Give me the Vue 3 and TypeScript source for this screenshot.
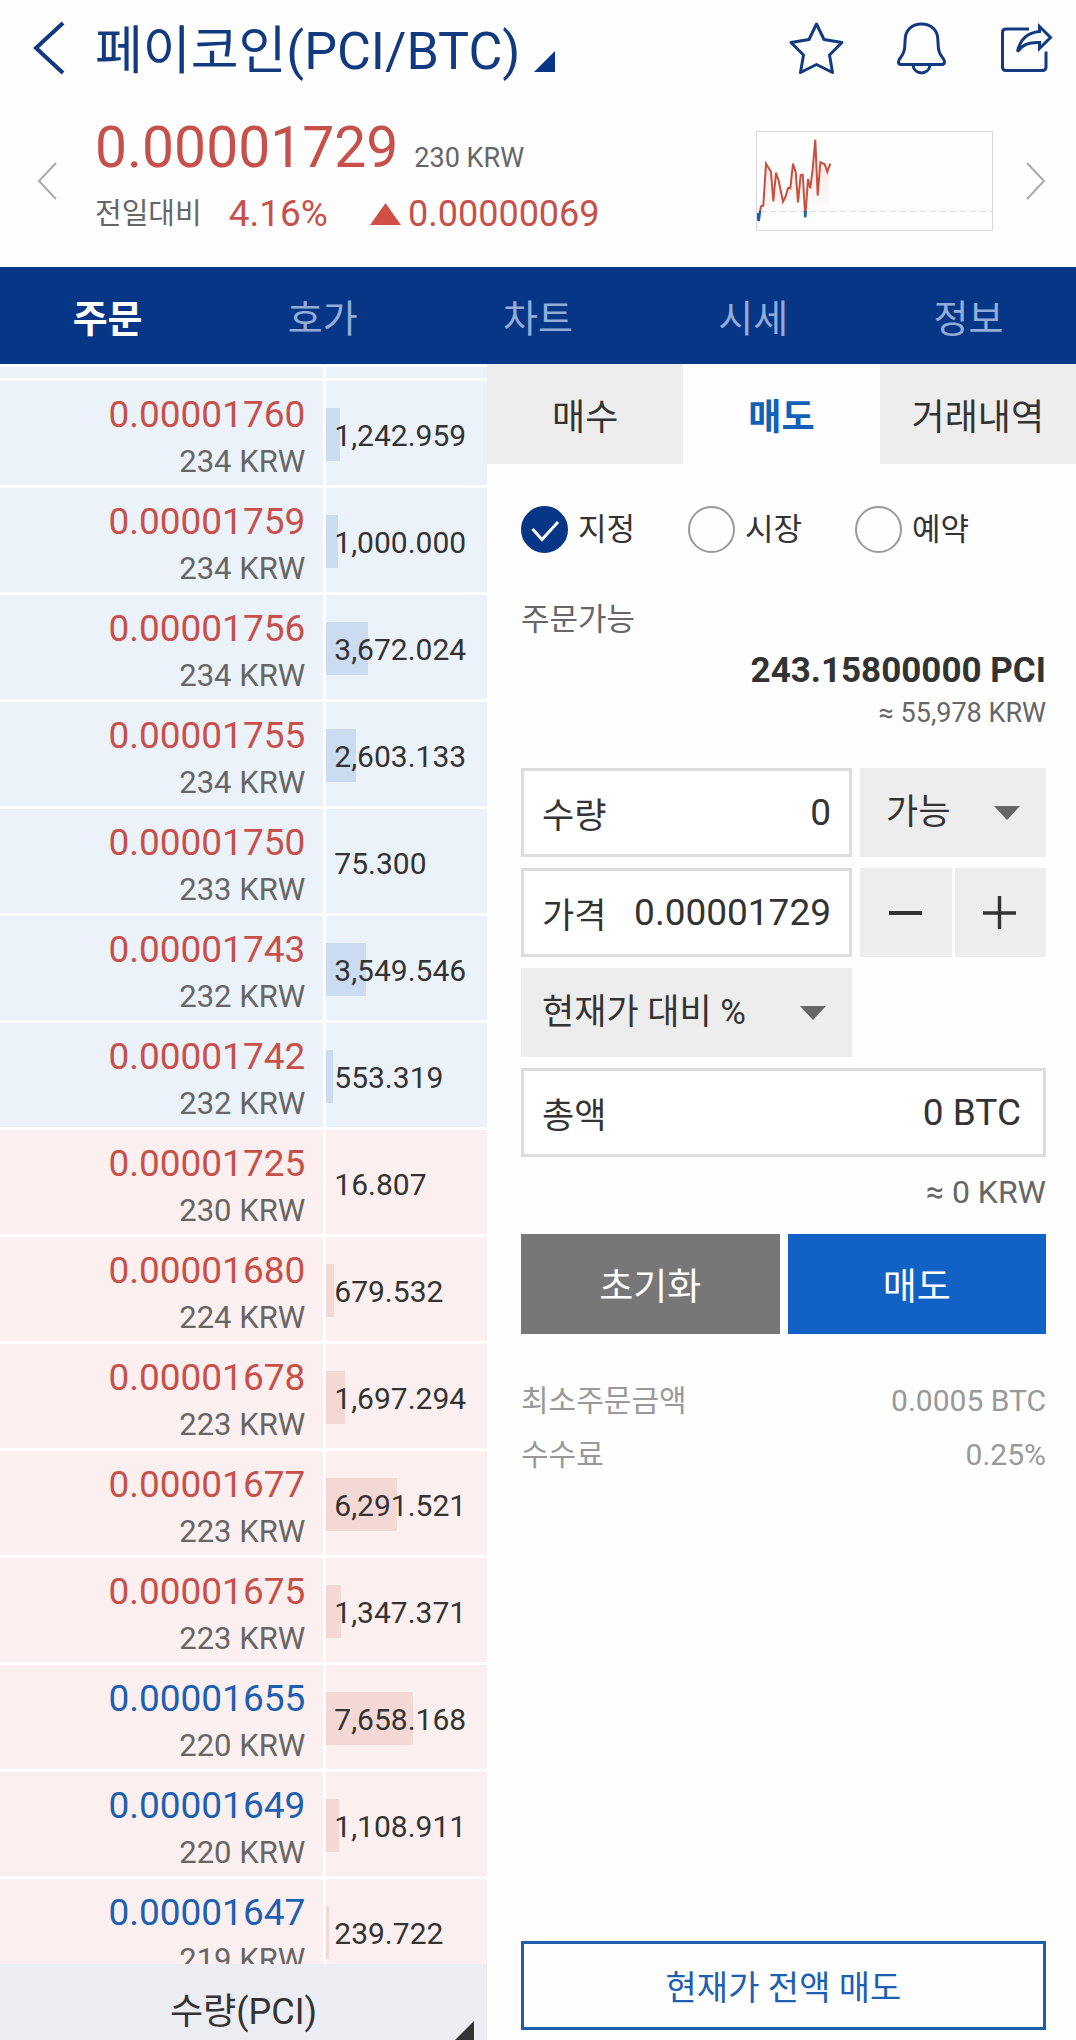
<script setup lang="ts">
import { ref } from 'vue'

interface BookRow {
  price: string
  krw: number
  quantity: string
  side: 'ask' | 'bid'
  trend: 'up' | 'down'
}

const sections = ['주문', '호가', '차트', '시세', '정보']
const activeSection = ref('주문')

const orderTabs = ['매수', '매도', '거래내역']
const activeOrderTab = ref('매도')

const orderTypes = ['지정', '시장', '예약']
const orderType = ref('지정')

const quantity = ref('0')
const price = ref('0.00001729')
const total = ref('0 BTC')

const rows: BookRow[] = [
  { price: '0.00001760', krw: 234, quantity: '1,242.959', side: 'ask', trend: 'up' },
  { price: '0.00001759', krw: 234, quantity: '1,000.000', side: 'ask', trend: 'up' },
  { price: '0.00001756', krw: 234, quantity: '3,672.024', side: 'ask', trend: 'up' },
  { price: '0.00001755', krw: 234, quantity: '2,603.133', side: 'ask', trend: 'up' },
  { price: '0.00001750', krw: 233, quantity: '75.300', side: 'ask', trend: 'up' },
  { price: '0.00001743', krw: 232, quantity: '3,549.546', side: 'ask', trend: 'up' },
  { price: '0.00001742', krw: 232, quantity: '553.319', side: 'ask', trend: 'up' },
  { price: '0.00001725', krw: 230, quantity: '16.807', side: 'bid', trend: 'up' },
  { price: '0.00001680', krw: 224, quantity: '679.532', side: 'bid', trend: 'up' },
  { price: '0.00001678', krw: 223, quantity: '1,697.294', side: 'bid', trend: 'up' },
  { price: '0.00001677', krw: 223, quantity: '6,291.521', side: 'bid', trend: 'up' },
  { price: '0.00001675', krw: 223, quantity: '1,347.371', side: 'bid', trend: 'up' },
  { price: '0.00001655', krw: 220, quantity: '7,658.168', side: 'bid', trend: 'down' },
  { price: '0.00001649', krw: 220, quantity: '1,108.911', side: 'bid', trend: 'down' },
  { price: '0.00001647', krw: 219, quantity: '239.722', side: 'bid', trend: 'down' },
]

// Depth bars are scaled to this quantity; tiny orders get no bar.
const FULL_DEPTH = 14250
const MIN_DEPTH = 100

function depth(row: BookRow): string {
  const amount = Number(row.quantity.replace(/,/g, ''))
  return amount < MIN_DEPTH ? '0' : `${(amount / FULL_DEPTH) * 100}%`
}
</script>

<template>
  <div class="app">
    <header class="topbar">
      <button class="plain back" type="button" aria-label="뒤로">
        <svg width="34" height="54" viewBox="0 0 34 54"><path d="M31 2 4 27l27 25" fill="none" stroke="#123a80" stroke-width="4" /></svg>
      </button>
      <button class="plain title" type="button">
        <span>페이코인(PCI/BTC)</span>
        <svg width="21" height="21" viewBox="0 0 21 21"><path d="M21 0v21H0z" fill="#083686" /></svg>
      </button>
      <div class="actions">
        <button class="plain" type="button" aria-label="관심">
          <svg width="56" height="56" viewBox="0 0 56 56" class="line-icon">
            <path d="M28.500 4 36 19.500 54 22.500 41.500 35 44.500 52.500 28.500 44.500 12.500 52.500 15.500 35 3 22.500 21 19.500z" />
          </svg>
        </button>
        <button class="plain" type="button" aria-label="알림">
          <svg width="56" height="56" viewBox="0 0 56 56" class="line-icon">
            <path d="M28.500 4C18 4 12.500 11 12.200 19L11.700 27C11.500 33 9.500 35 6.500 39 4.500 42 5.500 44.500 8.500 44.500H48.500C51.500 44.500 52.500 42 50.500 39 47.500 35 45.500 33 45.300 27L44.800 19C44.500 11 39 4 28.500 4zM20 45C21 55.500 36 55.500 37 45" />
          </svg>
        </button>
        <button class="plain" type="button" aria-label="공유">
          <svg width="56" height="56" viewBox="0 0 56 56" class="line-icon">
            <path d="M31 9H8Q4.500 9 4.500 12.500V47Q4.500 50.500 8 50.500H44.500Q48 50.500 48 47V31.500" stroke-linejoin="miter" />
            <path d="M41.500 6.500 52.500 17.500 41.500 28.500V22.500C31 22 25 24.500 19.500 31.500 22 20 29 12.500 41.500 11.500z" stroke-linejoin="miter" />
          </svg>
        </button>
      </div>
    </header>

    <section class="ticker">
      <button class="plain prev" type="button" aria-label="이전 코인">
        <svg width="20" height="38" viewBox="0 0 20 38"><path d="M19 1 2 19l17 18" fill="none" stroke="#aaa" stroke-width="2" /></svg>
      </button>
      <div class="quote">
        <div class="quote-price"><strong>0.00001729</strong><span>230 KRW</span></div>
        <div class="quote-change">
          <span class="caption">전일대비</span>
          <span class="rate">4.16%</span>
          <span class="diff">
            <svg width="31" height="22" viewBox="0 0 31 22"><path d="M15.500 0 31 22H0z" fill="#d24f45" /></svg>
            0.00000069
          </span>
        </div>
      </div>
      <svg class="spark" width="237" height="100" viewBox="0 0 237 100">
        <defs>
          <linearGradient id="glow" x1="0" y1="0" x2="0" y2="1">
            <stop offset="0" stop-color="#d24f45" stop-opacity=".2" />
            <stop offset="1" stop-color="#d24f45" stop-opacity="0" />
          </linearGradient>
          <clipPath id="above"><path d="M0 0H237V80H0z" /></clipPath>
          <clipPath id="below"><path d="M0 80H237V100H0z" /></clipPath>
          <path id="trace" d="M1 82 2.700 90 4 80.700 5 75.300 7.300 74.700 10 32.700 15 40.700 17.300 70.300 20 41.700 22.700 49.700 27 70.700 29.700 65.300 32 57 34.300 57.300 37 32.700 39.700 41.300 42 71.300 44.700 44 46.700 43.700 49.300 86.300 52 48 54.300 57.300 56.700 38 59.300 8.700 61.700 64.700 64.300 31.300 68.700 33.300 71.300 40.700 74.300 32.700" />
        </defs>
        <path d="M5 80V75L7 74.700 10 32.700 15 40.700 17.300 70 20 41.700 27 70.700 32 57 37 32.700 42 71 44.700 44 49 80 52 48 54 57 59.300 8.700 61.700 64 64.300 31.300 71.300 40.700 73.300 34V80z" fill="url(#glow)" />
        <path d="M4 80.500H236" stroke="#ddd" stroke-width="1" stroke-dasharray="6 4" />
        <use href="#trace" clip-path="url(#above)" fill="none" stroke="#c8503f" stroke-width="2" />
        <use href="#trace" clip-path="url(#below)" fill="none" stroke="#1261b4" stroke-width="2.400" />
        <path d="M.5.5H236.500V99.500H.5z" fill="none" stroke="#d8d8d8" />
      </svg>
      <button class="plain next" type="button" aria-label="다음 코인">
        <svg width="20" height="38" viewBox="0 0 20 38"><path d="M1 1 18 19 1 37" fill="none" stroke="#aaa" stroke-width="2" /></svg>
      </button>
    </section>

    <nav class="sections">
      <button
        v-for="name in sections"
        :key="name"
        type="button"
        :class="{ active: name === activeSection }"
        @click="activeSection = name"
      >{{ name }}</button>
    </nav>

    <main class="body">
      <section class="book">
        <div class="book-list">
          <table>
            <colgroup><col class="col-price" /><col class="col-quantity" /></colgroup>
            <tbody>
              <tr class="ask edge"><td></td><td></td></tr>
              <tr v-for="row in rows" :key="row.price" :class="row.side">
                <td class="price-cell">
                  <div class="price" :class="row.trend">{{ row.price }}</div>
                  <div class="krw">{{ row.krw }} KRW</div>
                </td>
                <td class="quantity-cell">
                  <div class="quantity">
                    <i class="bar" :style="{ width: depth(row) }"></i>
                    <span>{{ row.quantity }}</span>
                  </div>
                </td>
              </tr>
            </tbody>
          </table>
        </div>
        <button class="unit" type="button">
          수량(PCI)
          <svg class="corner" width="19" height="19" viewBox="0 0 19 19"><path d="M19 0v19H0z" fill="#333" /></svg>
        </button>
      </section>

      <section class="order">
        <div class="order-tabs">
          <button
            v-for="tab in orderTabs"
            :key="tab"
            type="button"
            :class="{ active: tab === activeOrderTab }"
            @click="activeOrderTab = tab"
          >{{ tab }}</button>
        </div>

        <form class="form" @submit.prevent>
          <div class="types">
            <label v-for="type in orderTypes" :key="type">
              <span class="radio">
                <input v-model="orderType" type="radio" name="order-type" :value="type" />
                <svg v-if="orderType === type" width="47" height="47" viewBox="0 0 47 47"><path d="M11.500 23 21 33.500 37 16" fill="none" stroke="#fff" stroke-width="3" /></svg>
              </span>
              {{ type }}
            </label>
          </div>

          <div class="available">주문가능</div>
          <div class="balance">243.15800000 PCI</div>
          <div class="balance-krw">≈ 55,978 KRW</div>

          <div class="fields">
            <div class="field">
              <label for="quantity">수량</label>
              <input id="quantity" v-model="quantity" type="text" inputmode="decimal" />
            </div>
            <div class="picker compact">
              <select aria-label="수량 비율"><option>가능</option></select>
              <svg width="26" height="14" viewBox="0 0 26 14"><path d="M0 0h26L13 14z" fill="#666" /></svg>
            </div>
            <div class="field">
              <label for="price">가격</label>
              <input id="price" v-model="price" type="text" inputmode="decimal" />
            </div>
            <div class="stepper">
              <button type="button" aria-label="가격 내리기">
                <svg width="34" height="34" viewBox="0 0 34 34"><path d="M0 17H33" stroke="#333" stroke-width="4" /></svg>
              </button>
              <button type="button" aria-label="가격 올리기">
                <svg width="34" height="34" viewBox="0 0 34 34"><path d="M0 17H33M16.500 0V33" stroke="#333" stroke-width="3.400" /></svg>
              </button>
            </div>
            <div class="picker">
              <select aria-label="현재가 대비 비율"><option>현재가 대비 %</option></select>
              <svg width="26" height="14" viewBox="0 0 26 14"><path d="M0 0h26L13 14z" fill="#666" /></svg>
            </div>
            <div class="field total">
              <label for="total">총액</label>
              <input id="total" v-model="total" type="text" />
            </div>
          </div>
          <div class="total-krw">≈ 0 KRW</div>

          <div class="submit">
            <button class="reset" type="reset">초기화</button>
            <button class="sell" type="submit">매도</button>
          </div>

          <dl class="fees">
            <div><dt>최소주문금액</dt><dd>0.0005 BTC</dd></div>
            <div><dt>수수료</dt><dd>0.25%</dd></div>
          </dl>

          <button class="sell-all" type="button">현재가 전액 매도</button>
        </form>
      </section>
    </main>
  </div>
</template>

<style>
body {
  margin: 0;
  background: #fefefe;
}
</style>

<style scoped>
* {
  box-sizing: border-box;
}
.app {
  display: flex;
  flex-direction: column;
  height: 100vh;
  color: #333;
  background: #fefefe;
  font-family: Roboto, "Noto Sans CJK KR", sans-serif;
  overflow: hidden;
}
button,
input,
select {
  margin: 0;
  padding: 0;
  border: 0;
  border-radius: 0;
  color: inherit;
  background: none;
  font: inherit;
}
svg {
  display: block;
  flex: none;
}
.plain {
  display: flex;
  align-items: center;
  flex: none;
}

.topbar {
  display: flex;
  align-items: center;
  flex: none;
  height: 96px;
  padding-right: 22px;
}
.back {
  width: 95px;
  padding-left: 32px;
}
.title {
  align-items: flex-end;
  gap: 14px;
  padding-top: 8px;
  color: #123a80;
  font-size: 52px;
  line-height: 60px;
}
.title svg {
  margin-bottom: 10px;
}
.actions {
  display: flex;
  gap: 49px;
  margin-left: auto;
}
.line-icon {
  fill: none;
  stroke: #123a80;
  stroke-width: 3;
  stroke-linejoin: round;
}

.ticker {
  display: flex;
  align-items: center;
  flex: none;
  padding: 20px 30px 21px 0;
}
.prev {
  width: 95px;
  padding-left: 37px;
}
.quote {
  flex: 1;
  padding-bottom: 12px;
}
.quote-price {
  display: flex;
  align-items: baseline;
  gap: 16px;
  color: #666;
  font-size: 27px;
  line-height: 40px;
}
.quote-price strong {
  color: #c8504a;
  font-size: 57px;
  font-weight: 400;
  line-height: 64px;
}
.quote-change {
  display: flex;
  align-items: center;
  margin-top: 14px;
  color: #c8504a;
  font-size: 36px;
  line-height: 40px;
}
.caption {
  color: #666;
  font-size: 29px;
}
.rate {
  margin-left: 27px;
  font-size: 37px;
}
.diff {
  display: flex;
  align-items: center;
  gap: 7px;
  margin-left: 42px;
}
.next {
  margin-left: 33px;
}

.sections {
  display: flex;
  flex: none;
  height: 97px;
  background: #083686;
}
.sections button {
  flex: 1;
  color: #94acd8;
  font-size: 38px;
}
.sections .active {
  color: #fff;
  font-weight: 700;
}

.body {
  display: grid;
  grid-template-columns: 487fr 589fr;
  flex: 1;
  min-height: 0;
}
.book {
  display: flex;
  flex-direction: column;
  min-height: 0;
}
.book-list {
  flex: 1;
  min-height: 0;
  border-top: 3px solid #fff;
  overflow: hidden;
}
table {
  width: 100%;
  border-spacing: 0;
  table-layout: fixed;
}
.col-price {
  width: 67%;
}
td {
  height: 107px;
  padding: 0;
  border-bottom: 3px solid #fff;
  vertical-align: top;
}
td:first-child {
  border-right: 3px solid #fff;
}
.edge td {
  height: 14px;
}
.ask td {
  background: #ebf2fa;
}
.bid td {
  background: #fbf0ef;
}
td.price-cell {
  padding: 10px 18px 0 0;
  text-align: right;
}
.price,
.krw {
  line-height: 47px;
}
.price {
  font-size: 37px;
}
.up {
  color: #c8504a;
}
.down {
  color: #1d5fb0;
}
.krw {
  color: #666;
  font-size: 31px;
}
td.quantity-cell {
  padding-top: 27px;
}
.quantity {
  position: relative;
  height: 53px;
  padding-left: 8px;
  font-size: 30px;
  line-height: 56px;
}
.quantity span {
  position: relative;
}
.bar {
  position: absolute;
  top: 0;
  bottom: 0;
  left: 0;
}
.ask .bar {
  background: #cbdcf0;
}
.bid .bar {
  background: #f4d8d6;
}
.unit {
  position: relative;
  flex: none;
  height: 76px;
  padding-top: 20px;
  background: #ecedf2;
  font-size: 36px;
  line-height: 56px;
}
.corner {
  position: absolute;
  right: 13px;
  bottom: 0;
}

.order {
  display: flex;
  flex-direction: column;
  min-height: 0;
}
.order-tabs {
  display: flex;
  flex: none;
  height: 100px;
}
.order-tabs button {
  flex: 1;
  background: #ededed;
  font-size: 36px;
}
.order-tabs .active {
  color: #1261b8;
  background: none;
  font-weight: 700;
}
.form {
  display: flex;
  flex-direction: column;
  flex: 1;
  padding: 42px 30px 10px 34px;
}
.types {
  display: flex;
  gap: 53px;
}
.types label {
  display: flex;
  align-items: center;
  gap: 10px;
  font-size: 31px;
  line-height: 47px;
}
.radio {
  display: grid;
}
.radio > * {
  grid-area: 1 / 1;
}
.radio input {
  width: 47px;
  height: 47px;
  border: 2px solid #999;
  border-radius: 50%;
  appearance: none;
}
.radio input:checked {
  border-color: #083686;
  background: #083686;
}
.radio svg {
  pointer-events: none;
}
.available {
  margin-top: 47px;
  color: #666;
  font-size: 31px;
  line-height: 40px;
}
.balance,
.balance-krw {
  line-height: 42px;
  text-align: right;
}
.balance {
  margin-top: 10px;
  font-size: 35px;
  font-weight: 700;
}
.balance-krw {
  color: #666;
  font-size: 27px;
}
.fields {
  display: grid;
  grid-template-columns: minmax(0, 1fr) 186px;
  grid-auto-rows: 89px;
  gap: 11px 8px;
  margin-top: 34px;
}
.field {
  display: flex;
  align-items: center;
  padding: 0 18px;
  border: 3px solid #dcdcdc;
  background: #fff;
  font-size: 37px;
}
.field label {
  flex: none;
  font-size: 35px;
}
.field input {
  flex: 1;
  width: 0;
  text-align: right;
}
.total {
  grid-column: 1 / -1;
  padding-right: 22px;
}
.picker {
  position: relative;
  background: #ededed;
  font-size: 35px;
}
.picker select {
  width: 100%;
  height: 100%;
  padding-left: 21px;
  appearance: none;
}
.compact select {
  padding-left: 26px;
}
.picker svg {
  position: absolute;
  top: 38px;
  right: 26px;
  pointer-events: none;
}
.stepper {
  display: flex;
  gap: 3px;
}
.stepper button {
  display: flex;
  align-items: center;
  justify-content: center;
  flex: 1;
  background: #ededed;
}
.total-krw {
  margin-top: 15px;
  color: #666;
  font-size: 32px;
  line-height: 40px;
  text-align: right;
}
.submit {
  display: flex;
  gap: 8px;
  margin-top: 22px;
}
.submit button {
  flex: 1;
  height: 100px;
  color: #fff;
  font-size: 37px;
}
.reset {
  background: #777;
}
.sell {
  background: #1261c4;
}
.fees {
  margin: 40px 0 0;
  color: #999;
  font-size: 30px;
  line-height: 54px;
}
.fees div {
  display: flex;
  justify-content: space-between;
}
.fees dd {
  margin: 0;
}
.sell-all {
  height: 89px;
  margin-top: auto;
  border: 3px solid #1d5fab;
  color: #1d5fb0;
  font-size: 34px;
}
</style>
